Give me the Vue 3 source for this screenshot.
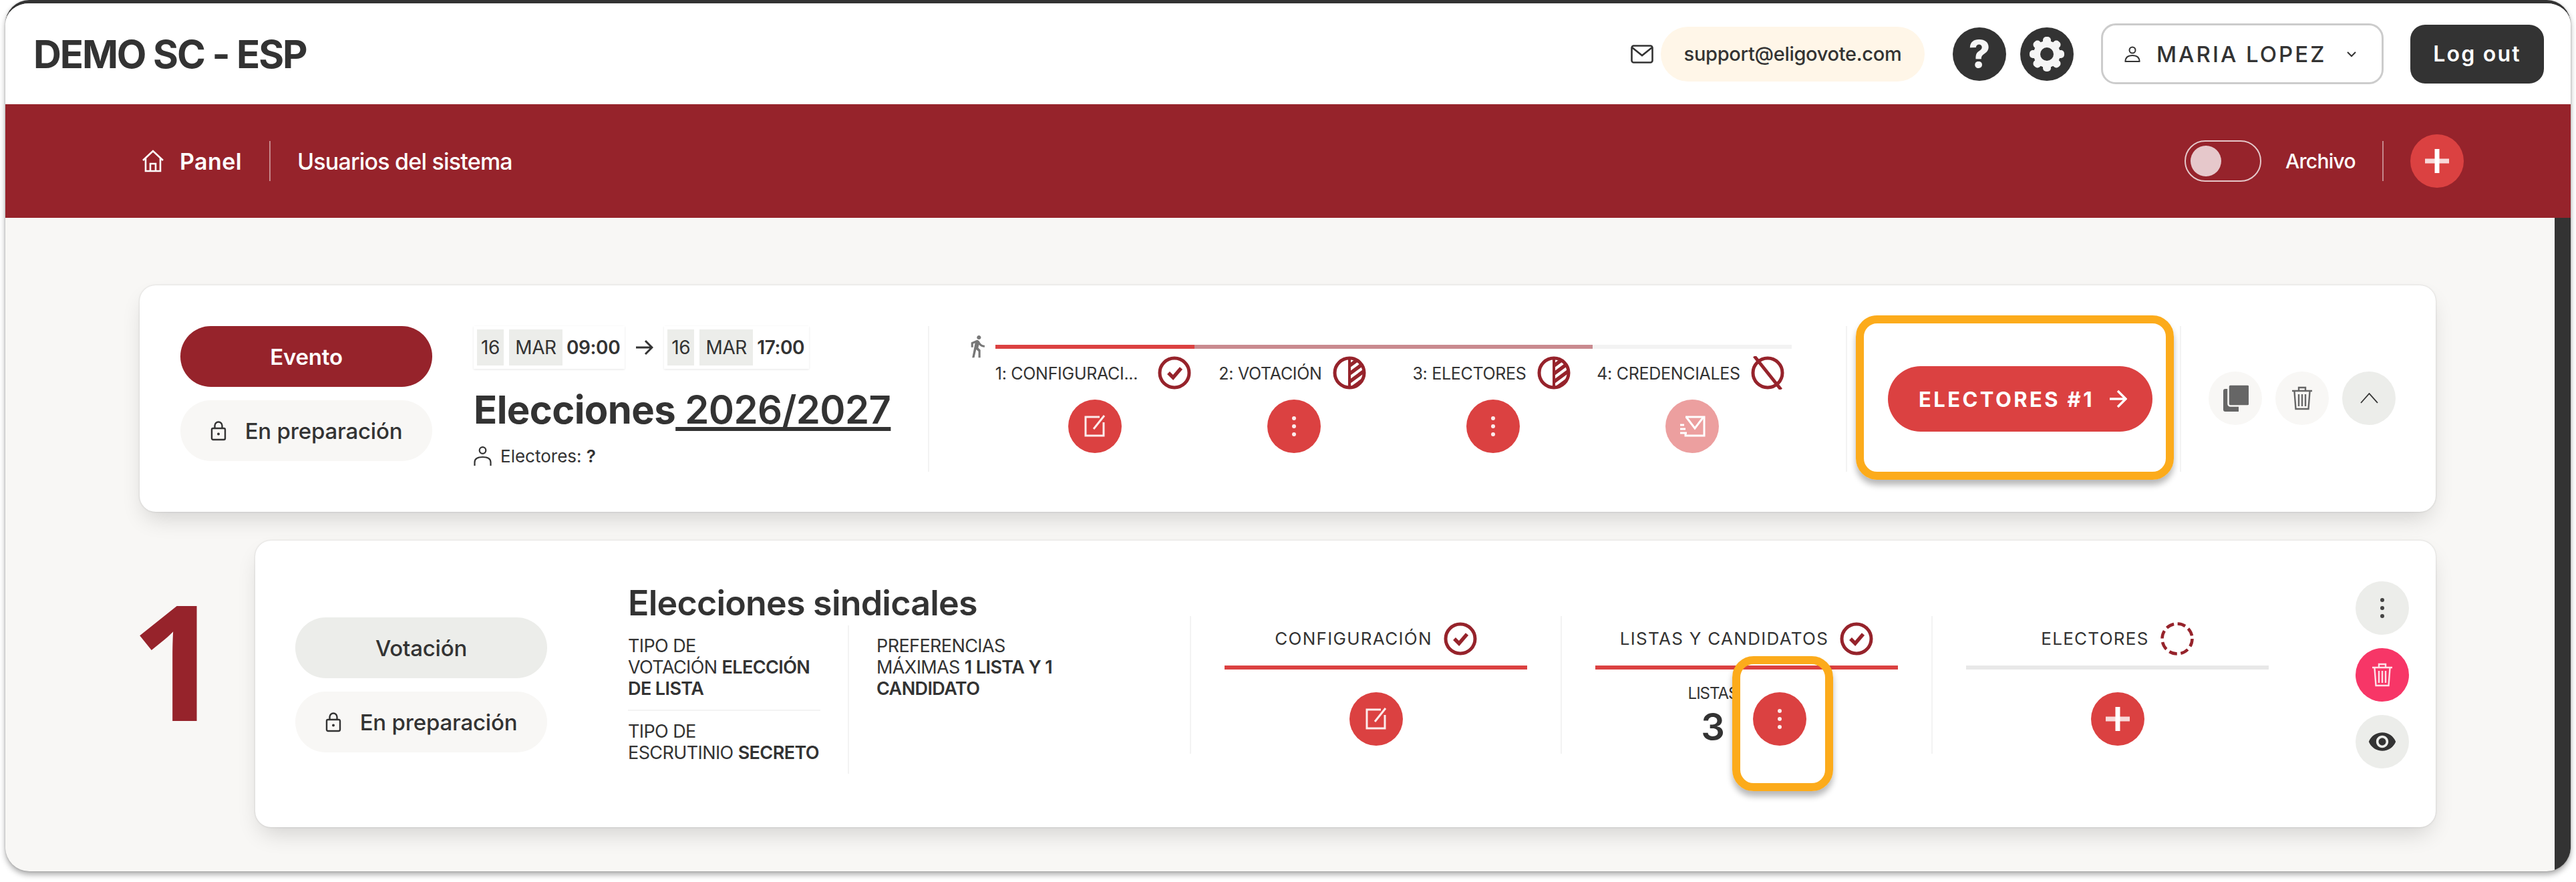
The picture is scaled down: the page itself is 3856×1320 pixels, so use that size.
<script setup>
const steps = [
  { label: '1: CONFIGURACI...', status: 'check', action: 'edit', wide: true },
  { label: '2: VOTACIÓN', status: 'half', action: 'dots' },
  { label: '3: ELECTORES', status: 'half', action: 'dots' },
  { label: '4: CREDENCIALES', status: 'none', action: 'send', faded: true }
]
const gearTeeth = [0, 45, 90, 135, 180, 225, 270, 315]
const stripes = [-2, 10, 22, 34, 46]
</script>

<template>
  <div class="stage">
    <div class="window">
      <header class="topbar">
        <div class="brand">DEMO SC - ESP</div>
        <svg class="mail-icon" viewBox="0 0 34 28" fill="none" stroke="#333" stroke-width="2.6">
          <rect x="1.5" y="1.5" width="31" height="25" rx="3" />
          <path d="M2 4l15 12L32 4" />
        </svg>
        <div class="support">support@eligovote.com</div>
        <div class="round-dark help">?</div>
        <div class="round-dark gear">
          <svg viewBox="0 0 80 80" width="80" height="80">
            <g fill="#f5f5f5">
              <circle cx="40" cy="40" r="20" />
              <rect v-for="a in gearTeeth" :key="a" x="34" y="14" width="12" height="16" rx="5" :transform="`rotate(${a} 40 40)`" />
            </g>
            <circle cx="40" cy="40" r="10" fill="#333" />
          </svg>
        </div>
        <div class="user-box">
          <svg class="user-icon" viewBox="0 0 24 24" fill="none" stroke="#333" stroke-width="2">
            <circle cx="12" cy="6" r="4.5" />
            <path d="M1.5 23c0-6 4-9 10.500-9s10.500 3 10.500 9z" />
          </svg>
          <span class="user-name">MARIA LOPEZ</span>
          <svg class="user-caret" viewBox="0 0 16 10" fill="none" stroke="#333" stroke-width="2"><path d="M2 2l6 6 6-6" /></svg>
        </div>
        <div class="logout">Log out</div>
      </header>

      <nav class="navbar">
        <svg class="home-icon" viewBox="0 0 34 34" fill="none" stroke="#fff" stroke-width="2.6">
          <path d="M2 16L17 2l15 14M6 13v19h22V13M13 32V21h8v11" />
        </svg>
        <span class="nav-active">Panel</span>
        <span class="nav-sep"></span>
        <span class="nav-link">Usuarios del sistema</span>
        <div class="nav-right">
          <div class="toggle"><span class="knob"></span></div>
          <span class="archive">Archivo</span>
          <span class="nav-sep"></span>
          <div class="circle red">
            <svg viewBox="0 0 36 36" width="36" height="36"><rect y="14.500" width="36" height="7" fill="#fff" fill-opacity=".8" /><rect x="14.500" width="7" height="36" fill="#fff" /></svg>
          </div>
        </div>
      </nav>

      <div class="viewport">
        <main class="content">
          <section class="card event-card">
            <div class="pills">
              <div class="pill pill-brand">Evento</div>
              <div class="pill pill-soft">
                <svg class="lock" viewBox="0 0 24 30" fill="none" stroke="#333" stroke-width="2.4">
                  <rect x="2" y="11" width="20" height="17" rx="2" />
                  <path d="M6.500 11V7a5.500 5.500 0 0 1 11 0v4" />
                  <circle cx="12" cy="19.500" r="2" fill="#333" stroke="none" />
                </svg>
                En preparación
              </div>
            </div>

            <div class="event-info">
              <div class="dates">
                <div class="date-box"><span class="chip chip-d">16</span><span class="chip chip-m">MAR</span><b>09:00</b></div>
                <svg class="date-arrow" viewBox="0 0 27 24" fill="none" stroke="#333" stroke-width="3"><path d="M1 12h24M15 2l10 10-10 10" /></svg>
                <div class="date-box"><span class="chip chip-d">16</span><span class="chip chip-m">MAR</span><b>17:00</b></div>
              </div>
              <h1 class="event-title">Elecciones<span class="underlined"> 2026/2027</span></h1>
              <div class="voters">
                <svg class="voter-icon" viewBox="0 0 27 30" fill="none" stroke="#333" stroke-width="2.2">
                  <circle cx="13.500" cy="6" r="4.800" />
                  <path d="M1.500 29v-5c0-5 4-8 12-8s12 3 12 8v5" />
                </svg>
                <span>Electores: <b>?</b></span>
              </div>
            </div>

            <div class="progress">
              <div class="track-row">
                <svg class="walker" viewBox="3 1 18 23" fill="#777"><path d="M13.500 5.500c1.100 0 2-.9 2-2s-.9-2-2-2-2 .9-2 2 .9 2 2 2zM9.800 8.900L7 23h2.100l1.800-8 2.100 2v6h2v-7.500l-2.100-2 .6-3C14.800 12 16.800 13 19 13v-2c-1.900 0-3.500-1-4.300-2.400l-1-1.600c-.4-.6-1-1-1.700-1-.3 0-.5.1-.8.1L6 8.300V13h2V9.600l1.800-.7" /></svg>
                <div class="track"><i class="seg seg-done"></i><i class="seg seg-mid"></i><i class="seg seg-mid"></i><i class="seg seg-off"></i></div>
              </div>
              <div class="steps">
                <div v-for="(s, i) in steps" :key="s.label" class="step">
                  <div class="step-head" :class="{ wide: s.wide }">
                    <span class="step-label">{{ s.label }}</span>
                    <svg class="status" viewBox="0 0 50 50" fill="none" stroke="#96232b" stroke-width="5">
                      <template v-if="s.status === 'check'">
                        <circle cx="25" cy="25" r="22" />
                        <path d="M16 25l7 7 12-14" stroke-width="5.500" />
                      </template>
                      <template v-else-if="s.status === 'half'">
                        <clipPath :id="`half-${i}`"><path d="M25 3a22 22 0 0 1 0 44z" /></clipPath>
                        <circle cx="25" cy="25" r="22" />
                        <path d="M25 3v44" stroke-width="4" />
                        <g :clip-path="`url(#half-${i})`">
                          <path v-for="y in stripes" :key="y" :d="`M20 ${y + 8}L50 ${y - 14}`" stroke-width="5.500" />
                        </g>
                      </template>
                      <template v-else>
                        <circle cx="25" cy="25" r="22" />
                        <path d="M5 0l40 50" />
                      </template>
                    </svg>
                  </div>
                  <div class="circle red" :class="{ faded: s.faded }">
                    <svg v-if="s.action === 'edit'" viewBox="0 0 34 34" width="34" height="34" fill="none" stroke="#fff" stroke-opacity=".9" stroke-width="3">
                      <path d="M24 3H3v28h27V11" /><path d="M15 21L31 1" />
                    </svg>
                    <svg v-else-if="s.action === 'send'" viewBox="0 0 40 32" width="40" height="32" fill="none" stroke="#fff" stroke-width="3">
                      <path d="M10 2h28v28H10v-4" /><path d="M11 2l13 17L37 2" /><path d="M2 14h6M2 20h8M2 26h10" />
                    </svg>
                    <svg v-else viewBox="0 0 8 34" width="8" height="34" fill="#fff" fill-opacity=".9"><circle cx="4" cy="5" r="3" /><circle cx="4" cy="17" r="3" /><circle cx="4" cy="29" r="3" /></svg>
                  </div>
                </div>
              </div>
            </div>

            <div class="cta-col">
              <div class="cta">
                <span>ELECTORES #1</span>
                <svg viewBox="0 0 27 30" width="27" height="30" fill="none" stroke="#fff" stroke-width="3.400"><path d="M1 15h24M13 3l12 12-12 12" /></svg>
              </div>
              <div class="highlight hl-cta"></div>
            </div>

            <div class="event-actions">
              <div class="circle soft">
                <svg viewBox="0 0 40 40" width="40" height="40">
                  <path d="M2 9a3 3 0 0 1 3-3h20v34H5a3 3 0 0 1-3-3z" fill="#666" />
                  <rect x="9.500" y="-.500" width="32" height="32" rx="3" fill="#666" stroke="#f8f7f5" stroke-width="2.500" />
                </svg>
              </div>
              <div class="circle soft">
                <svg viewBox="0 0 32 36" width="32" height="36" fill="none" stroke="#666" stroke-width="2.400">
                  <path d="M1 7h30M11 6V2h10v4M4.500 8l2 26h19l2-26M11 12v18M16 12v18M21 12v18" />
                </svg>
              </div>
              <div class="circle mute">
                <svg viewBox="0 0 27 16" width="27" height="16" fill="none" stroke="#333" stroke-width="1.800"><path d="M1 15L13.500 1 26 15" /></svg>
              </div>
            </div>
          </section>

          <section class="vote-row">
            <div class="vote-index">1</div>
            <div class="card vote-card">
              <div class="pills vote-pills">
                <div class="pill pill-mute">Votación</div>
                <div class="pill pill-soft">
                  <svg class="lock" viewBox="0 0 24 30" fill="none" stroke="#333" stroke-width="2.400">
                    <rect x="2" y="11" width="20" height="17" rx="2" />
                    <path d="M6.500 11V7a5.500 5.500 0 0 1 11 0v4" />
                    <circle cx="12" cy="19.500" r="2" fill="#333" stroke="none" />
                  </svg>
                  En preparación
                </div>
              </div>

              <div class="vote-info">
                <h2 class="vote-title">Elecciones sindicales</h2>
                <div class="spec">
                  <div class="spec-a">
                    <p>TIPO DE<br />VOTACIÓN <b>ELECCIÓN<br />DE LISTA</b></p>
                    <hr />
                    <p>TIPO DE<br />ESCRUTINIO <b>SECRETO</b></p>
                  </div>
                  <div class="spec-b">
                    <p>PREFERENCIAS<br />MÁXIMAS <b>1 LISTA Y 1<br />CANDIDATO</b></p>
                  </div>
                </div>
              </div>

              <div class="phase">
                <div class="phase-head">
                  <span>CONFIGURACIÓN</span>
                  <svg class="status" viewBox="0 0 50 50" fill="none" stroke="#96232b" stroke-width="5"><circle cx="25" cy="25" r="22" /><path d="M16 25l7 7 12-14" stroke-width="5.500" /></svg>
                </div>
                <div class="phase-bar on"></div>
                <div class="phase-body">
                  <div class="circle red">
                    <svg viewBox="0 0 34 34" width="34" height="34" fill="none" stroke="#fff" stroke-opacity=".9" stroke-width="3"><path d="M24 3H3v28h27V11" /><path d="M15 21L31 1" /></svg>
                  </div>
                </div>
              </div>

              <div class="phase">
                <div class="phase-head">
                  <span>LISTAS Y CANDIDATOS</span>
                  <svg class="status" viewBox="0 0 50 50" fill="none" stroke="#96232b" stroke-width="5"><circle cx="25" cy="25" r="22" /><path d="M16 25l7 7 12-14" stroke-width="5.500" /></svg>
                </div>
                <div class="phase-bar on"></div>
                <div class="phase-body lists">
                  <div class="count"><small>LISTAS</small><strong>3</strong></div>
                  <div class="circle red">
                    <svg viewBox="0 0 8 34" width="8" height="34" fill="#fff" fill-opacity=".9"><circle cx="4" cy="5" r="3" /><circle cx="4" cy="17" r="3" /><circle cx="4" cy="29" r="3" /></svg>
                  </div>
                </div>
                <div class="highlight hl-more"></div>
              </div>

              <div class="phase">
                <div class="phase-head">
                  <span>ELECTORES</span>
                  <svg class="status" viewBox="0 0 50 50" fill="none" stroke="#96232b" stroke-width="4.500"><circle cx="25" cy="25" r="22.500" stroke-dasharray="12 5.670" /></svg>
                </div>
                <div class="phase-bar"></div>
                <div class="phase-body">
                  <div class="circle red">
                    <svg viewBox="0 0 36 36" width="36" height="36"><rect y="14.500" width="36" height="7" fill="#fff" fill-opacity=".8" /><rect x="14.500" width="7" height="36" fill="#fff" /></svg>
                  </div>
                </div>
              </div>

              <div class="vote-actions">
                <div class="circle mute">
                  <svg viewBox="0 0 8 34" width="8" height="34" fill="#444"><circle cx="4" cy="5" r="3" /><circle cx="4" cy="17" r="3" /><circle cx="4" cy="29" r="3" /></svg>
                </div>
                <div class="circle pink">
                  <svg viewBox="0 0 32 36" width="32" height="36" fill="none" stroke="#fff" stroke-opacity=".85" stroke-width="2.400"><path d="M1 7h30M11 6V2h10v4M4.500 8l2 26h19l2-26M11 12v18M16 12v18M21 12v18" /></svg>
                </div>
                <div class="circle mute">
                  <svg viewBox="0 0 24 24" width="44" height="44" fill="#333"><path d="M12 4.500C7 4.500 2.730 7.610 1 12c1.730 4.390 6 7.500 11 7.500s9.270-3.110 11-7.500c-1.730-4.390-6-7.500-11-7.500zM12 17c-2.760 0-5-2.240-5-5s2.240-5 5-5 5 2.240 5 5-2.240 5-5 5zm0-8c-1.660 0-3 1.340-3 3s1.340 3 3 3 3-1.340 3-3-1.340-3-3-3z" /></svg>
                </div>
              </div>
            </div>
          </section>
        </main>
        <div class="scrollbar"></div>
      </div>
    </div>
  </div>
</template>

<style>
html, body { margin: 0; background: #fff; }
</style>

<style scoped>
.stage {
  width: 3856px;
  height: 1320px;
  box-sizing: border-box;
  padding: 0 8px 16px;
  font-family: Inter, "Liberation Sans", sans-serif;
  color: #333;
  overflow: hidden;
}
.window {
  height: 100%;
  box-sizing: border-box;
  border-top: 5px solid #333;
  border-radius: 36px;
  overflow: hidden;
  background: #f8f7f5;
  box-shadow: 0 5px 9px rgba(0, 0, 0, .32), 0 0 3px rgba(0, 0, 0, .2);
  display: flex;
  flex-direction: column;
}
.topbar {
  flex: none;
  height: 151px;
  box-sizing: border-box;
  padding: 0 40px 0 42px;
  background: #fff;
  display: flex;
  align-items: center;
}
.brand { font-size: 58px; font-weight: 700; letter-spacing: -2.100px; margin-right: auto; }
.mail-icon { width: 34px; height: 28px; margin-right: 11px; }
.support {
  width: 395px;
  height: 82px;
  border-radius: 41px;
  background: #fff6e8;
  font-size: 29px;
  font-weight: 500;
  letter-spacing: -.3px;
  display: flex;
  align-items: center;
  justify-content: center;
  margin-right: 42px;
}
.round-dark {
  width: 80px;
  height: 80px;
  border-radius: 50%;
  background: #333;
  display: flex;
  align-items: center;
  justify-content: center;
  flex: none;
}
.help { color: #f5f5f5; font-size: 56px; font-weight: 800; margin-right: 21px; }
.gear { margin-right: 41px; }
.user-box {
  width: 423px;
  height: 91px;
  box-sizing: border-box;
  border: 3px solid #ccc;
  border-radius: 22px;
  display: flex;
  align-items: center;
  padding-left: 32px;
  margin-right: 40px;
}
.user-icon { width: 24px; height: 24px; margin-right: 24px; }
.user-name { font-size: 33px; font-weight: 500; letter-spacing: 3px; width: 284px; white-space: nowrap; }
.user-caret { width: 16px; height: 10px; }
.logout {
  width: 200px;
  height: 88px;
  border-radius: 22px;
  background: #333;
  color: #fff;
  font-size: 32px;
  font-weight: 600;
  letter-spacing: 2.200px;
  display: flex;
  align-items: center;
  justify-content: center;
}

.navbar {
  flex: none;
  height: 170px;
  box-sizing: border-box;
  padding: 0 160px 0 204px;
  background: #96232b;
  color: #fff;
  display: flex;
  align-items: center;
}
.home-icon { width: 34px; height: 34px; margin-right: 23px; }
.nav-active { font-size: 34px; font-weight: 600; letter-spacing: .4px; }
.nav-sep { width: 2px; height: 60px; background: rgba(255, 255, 255, .45); flex: none; }
.nav-active + .nav-sep { margin: 0 40px 0 41px; }
.nav-link { font-size: 34px; font-weight: 500; letter-spacing: -.8px; }
.nav-right { margin-left: auto; display: flex; align-items: center; }
.toggle {
  width: 115px;
  height: 62px;
  box-sizing: border-box;
  border: 2px solid rgba(255, 255, 255, .75);
  border-radius: 31px;
  padding: 6px 7px;
}
.knob { display: block; width: 46px; height: 46px; border-radius: 50%; background: #e6c8cb; }
.archive { font-size: 30px; font-weight: 500; letter-spacing: -.7px; margin: 0 40px 0 36px; }
.archive + .nav-sep { margin-right: 40px; }

.circle {
  flex: none;
  width: 80px;
  height: 80px;
  border-radius: 50%;
  display: flex;
  align-items: center;
  justify-content: center;
}
.red { background: #db4141; }
.faded { opacity: .5; }
.soft { background: #f8f7f5; }
.mute { background: #ecedea; }
.pink { background: #f73667; }

.viewport { flex: 1; min-height: 0; display: flex; }
.content { flex: 1; padding: 101px 0 0 201px; min-width: 0; }
.scrollbar { flex: none; width: 24px; background: #333; }

.card {
  background: #fff;
  border-radius: 24px;
  box-shadow: 0 0 3px rgba(0, 0, 0, .16), 0 16px 34px -8px rgba(0, 0, 0, .16);
  display: flex;
  align-items: flex-start;
  box-sizing: border-box;
}
.event-card { width: 3437px; height: 339px; padding: 61px 0 0 61px; }

.pills { width: 377px; flex: none; display: flex; flex-direction: column; gap: 20px; }
.pill {
  height: 91px;
  border-radius: 46px;
  display: flex;
  align-items: center;
  justify-content: center;
  font-size: 33px;
  font-weight: 500;
  letter-spacing: -.2px;
}
.pill-brand { background: #96232b; color: #fff; font-weight: 600; }
.pill-soft { background: #f8f7f5; gap: 28px; }
.pill-mute { background: #ecedea; }
.lock { width: 24px; height: 30px; }

.event-info { width: 680px; flex: none; margin-left: 62px; box-sizing: border-box; }
.dates { display: flex; align-items: center; }
.date-box {
  height: 64px;
  box-sizing: border-box;
  padding: 4px 7px 4px 5px;
  display: flex;
  align-items: center;
  box-shadow: 0 1px 3px rgba(0, 0, 0, .1);
  font-size: 28px;
  letter-spacing: -.4px;
}
.date-box b { font-weight: 600; margin-left: 6px; }
.chip {
  height: 54px;
  background: #ecedea;
  display: flex;
  align-items: center;
  justify-content: center;
  font-weight: 400;
}
.chip-d { width: 40px; margin-right: 8px; }
.chip-m { width: 80px; }
.date-arrow { width: 27px; height: 24px; margin: 0 16px; }
.event-title { margin: 26px 0 0; font-size: 58px; font-weight: 700; line-height: 70px; letter-spacing: -.6px; white-space: nowrap; }
.underlined { font-weight: 600; text-decoration: underline; text-decoration-thickness: 6px; text-underline-offset: 5px; text-decoration-skip-ink: none; }
.voters { display: flex; align-items: center; gap: 13px; font-size: 26px; letter-spacing: 0; margin-top: 19px; }
.voters b { font-weight: 600; }
.voter-icon { width: 27px; height: 30px; }

.progress {
  flex: none;
  width: 1374px;
  height: 218px;
  box-sizing: border-box;
  border-left: 2px solid #f3f3f3;
  padding-left: 58px;
}
.track-row { display: flex; align-items: center; gap: 13px; margin-top: 10px; height: 42px; }
.walker { width: 28px; height: 42px; }
.track { display: flex; width: 1192px; height: 6px; }
.seg { flex: 1; }
.seg-done { background: #db4141; }
.seg-mid { background: #c98a8f; }
.seg-off { background: #f3f3f3; }
.steps { display: flex; margin: -8px 0 0 41px; }
.step { width: 298px; flex: none; display: flex; flex-direction: column; align-items: center; gap: 15px; }
.step-head { display: flex; align-items: center; justify-content: center; gap: 16px; height: 51px; margin-left: -5px; white-space: nowrap; }
.step-head.wide { gap: 30px; }
.step-label { font-size: 25px; letter-spacing: -.3px; font-weight: 400; padding-top: 2px; }
.status { width: 50px; height: 50px; flex: none; }

.cta-col {
  position: relative;
  flex: none;
  width: 502px;
  height: 218px;
  box-sizing: border-box;
  border: solid #f3f3f3;
  border-width: 0 2px;
  padding: 60px 0 0 61px;
}
.cta {
  width: 396px;
  height: 98px;
  box-sizing: border-box;
  padding-left: 8px;
  border-radius: 49px;
  background: #db4141;
  color: #fff;
  display: flex;
  align-items: center;
  justify-content: center;
  gap: 22px;
  font-size: 31px;
  font-weight: 700;
  letter-spacing: 3.400px;
}
.highlight {
  position: absolute;
  box-sizing: border-box;
  border: 12px solid #fcab1b;
  box-shadow: 0 8px 10px rgba(0, 0, 0, .28);
}
.hl-cta { left: 13px; top: -16px; width: 476px; height: 246px; border-radius: 32px; }
.hl-more { left: 255px; top: 60px; width: 151px; height: 202px; border-radius: 32px; }
.event-actions { display: flex; gap: 20px; margin: 68px 0 0 41px; }

.vote-row { display: flex; margin: 43px 0 0 8px; }
.vote-index {
  flex: none;
  width: 165px;
  margin-top: 91px;
  text-indent: -22px;
  font-family: "Open Sans", "Liberation Sans", sans-serif;
  font-size: 241px;
  line-height: 172px;
  font-weight: 700;
  color: #96232b;
}
.vote-card { width: 3264px; height: 429px; padding-left: 60px; }
.vote-pills { margin-top: 115px; }
.vote-info { flex: none; width: 841px; margin-left: 121px; margin-top: 63px; box-sizing: border-box; }
.vote-title { margin: 0; font-size: 52px; font-weight: 600; line-height: 62px; letter-spacing: -.8px; white-space: nowrap; }
.spec { display: flex; margin-top: 2px; height: 222px; font-size: 27px; line-height: 32px; letter-spacing: -.6px; }
.spec p { margin: 0; white-space: nowrap; }
.spec b { font-weight: 600; }
.spec hr { border: 0; height: 2px; background: #f3f3f3; margin: 15px 0; width: 288px; }
.spec-a { width: 329px; flex: none; padding-top: 15px; box-sizing: border-box; }
.spec-b { flex: 1; border-left: 2px solid #f3f3f3; padding: 15px 0 0 41px; }

.phase {
  position: relative;
  flex: none;
  width: 555px;
  height: 206px;
  margin-top: 113px;
  box-sizing: border-box;
  border-left: 2px solid #f3f3f3;
  padding-top: 8px;
}
.phase-head {
  height: 51px;
  display: flex;
  align-items: center;
  justify-content: center;
  gap: 17px;
  font-size: 26px;
  font-weight: 400;
  letter-spacing: 1.300px;
  white-space: nowrap;
}
.phase-bar { height: 6px; margin: 15px 50px 0; background: #e8e8e8; }
.phase-bar.on { background: #db4141; }
.phase-body { margin-top: 34px; display: flex; align-items: center; justify-content: center; }
.lists { gap: 21px; }
.count { width: 78px; display: flex; flex-direction: column; align-items: center; margin-top: -13px; }
.count small { font-size: 24px; line-height: 30px; letter-spacing: -1px; margin-bottom: 7px; }
.count strong { font-size: 56px; line-height: 56px; font-weight: 600; }
.vote-actions { flex: none; display: flex; flex-direction: column; gap: 20px; margin: 61px 0 0 80px; }
</style>
